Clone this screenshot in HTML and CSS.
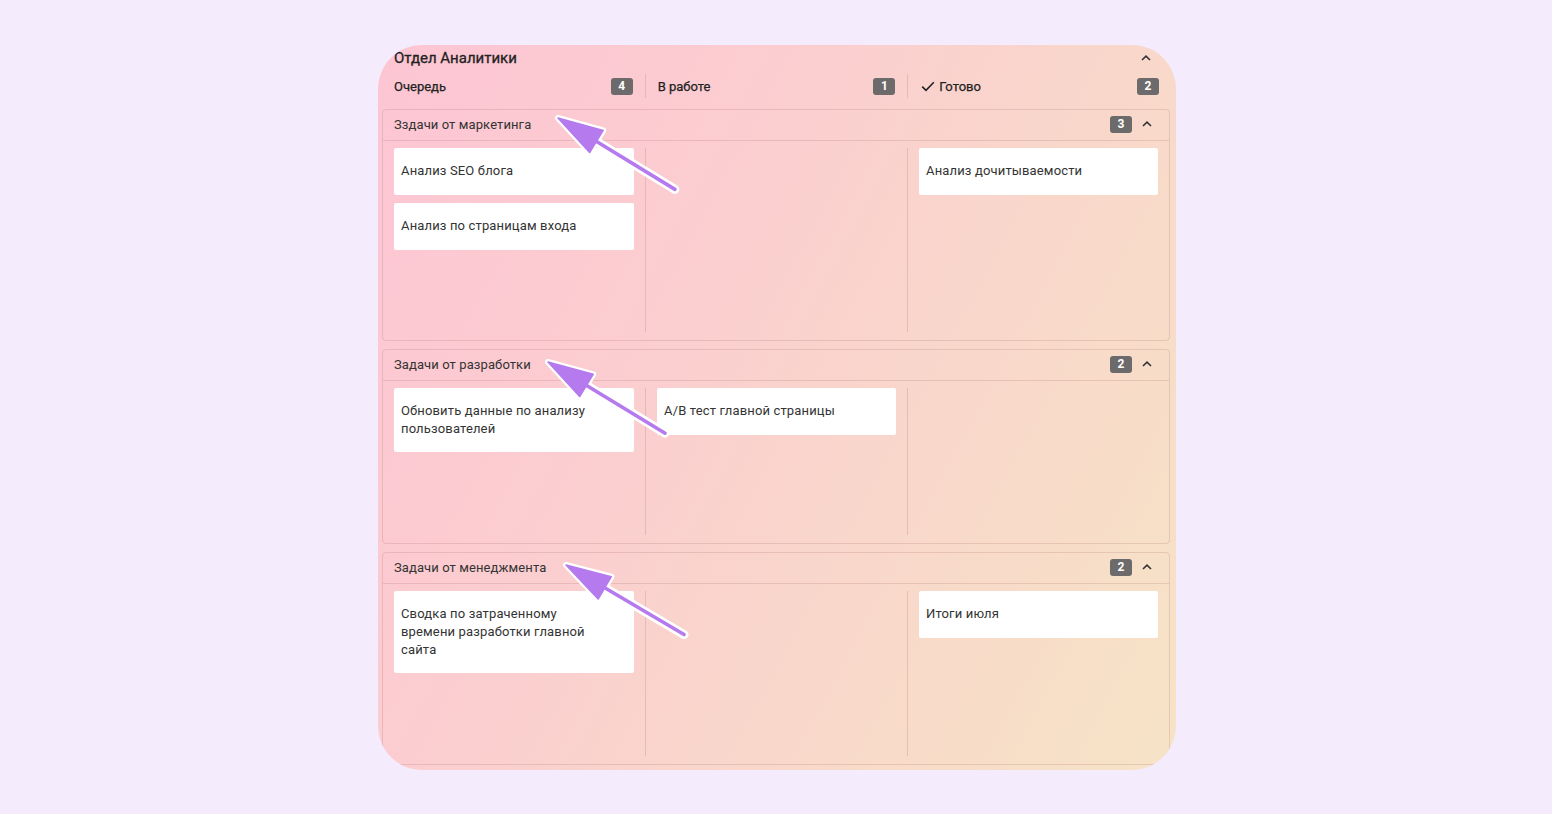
FILE: index.html
```html
<!DOCTYPE html>
<html lang="ru">
<head>
<meta charset="utf-8">
<title>Отдел Аналитики</title>
<link rel="stylesheet" href="styles.css">
</head>
<body>
<div class="panel">
  <div class="panel-head">
    <span class="dot"></span>
    <span class="panel-title">Отдел Аналитики</span>
    <svg class="chev" width="10" height="6" viewBox="0 0 10 6"><path d="M1 5L5 1.2L9 5" fill="none" stroke="#333" stroke-width="1.6"/></svg>
  </div>
  <div class="col-heads">
    <div class="col-head"><span class="col-name">Очередь</span><span class="badge">4</span></div>
    <div class="col-head"><span class="col-name">В работе</span><span class="badge">1</span></div>
    <div class="col-head"><span class="col-name"><svg class="check" width="14" height="11" viewBox="0 0 14 11"><path d="M1.2 5.6L5 9.3L12.8 1.3" fill="none" stroke="#222" stroke-width="1.6"/></svg>Готово</span><span class="badge">2</span></div>
  </div>

  <div class="lanes">
    <section class="lane">
      <div class="lane-head">
        <span class="lane-title">Зздачи от маркетинга</span>
        <span class="badge">3</span>
        <svg class="chev" width="10" height="6" viewBox="0 0 10 6"><path d="M1 5L5 1.2L9 5" fill="none" stroke="#333" stroke-width="1.6"/></svg>
      </div>
      <div class="lane-body lane-body-a">
        <div class="col">
          <div class="card">Анализ SEO блога</div>
          <div class="card">Анализ по страницам входа</div>
        </div>
        <div class="col"></div>
        <div class="col">
          <div class="card">Анализ дочитываемости</div>
        </div>
      </div>
    </section>

    <section class="lane">
      <div class="lane-head">
        <span class="lane-title">Задачи от разработки</span>
        <span class="badge">2</span>
        <svg class="chev" width="10" height="6" viewBox="0 0 10 6"><path d="M1 5L5 1.2L9 5" fill="none" stroke="#333" stroke-width="1.6"/></svg>
      </div>
      <div class="lane-body lane-body-b">
        <div class="col">
          <div class="card">Обновить данные по анализу пользователей</div>
        </div>
        <div class="col">
          <div class="card">A/B тест главной страницы</div>
        </div>
        <div class="col"></div>
      </div>
    </section>

    <section class="lane">
      <div class="lane-head">
        <span class="lane-title">Задачи от менеджмента</span>
        <span class="badge">2</span>
        <svg class="chev" width="10" height="6" viewBox="0 0 10 6"><path d="M1 5L5 1.2L9 5" fill="none" stroke="#333" stroke-width="1.6"/></svg>
      </div>
      <div class="lane-body lane-body-c">
        <div class="col">
          <div class="card">Сводка по затраченному времени разработки главной сайта</div>
        </div>
        <div class="col"></div>
        <div class="col">
          <div class="card">Итоги июля</div>
        </div>
      </div>
    </section>
  </div>

  <svg class="arrows" width="798" height="725" viewBox="0 0 798 725">
    <defs>
      <g id="arrow">
        <line x1="38" y1="0" x2="137" y2="0" stroke="#ffffff" stroke-width="9" stroke-linecap="round"/>
        <polygon points="0,0 45,-13 45,13" fill="#ffffff" stroke="#ffffff" stroke-width="6" stroke-linejoin="round"/>
        <line x1="38" y1="0" x2="137" y2="0" stroke="#b47aee" stroke-width="3.6" stroke-linecap="round"/>
        <polygon points="0,0 45,-13 45,13" fill="#b47aee" stroke="#b47aee" stroke-width="1.5" stroke-linejoin="round"/>
      </g>
    </defs>
    <use href="#arrow" transform="translate(180 73) rotate(31.4)"/>
    <use href="#arrow" transform="translate(170 317) rotate(31.3)"/>
    <use href="#arrow" transform="translate(188 520) rotate(30.5)"/>
  </svg>
</div>
</body>
</html>
```
FILE: styles.css
```css
* { box-sizing: border-box; }

html, body {
  margin: 0;
  padding: 0;
}

body {
  background: #f4ebfd;
  font-family: Roboto, "Liberation Sans", Arial, sans-serif;
  color: #2b2b2b;
  padding-top: 45px;
}

.panel {
  position: relative;
  width: 798px;
  height: 725px;
  margin: 0 0 0 378px;
  padding: 0 6px 0 4px;
  border-radius: 44px;
  overflow: hidden;
  background: linear-gradient(118deg, #fdc5d3 0%, #fbcdd0 35%, #f9d6cb 60%, #f6e3c6 100%);
}

.panel-head {
  height: 25px;
  display: flex;
  align-items: center;
  padding: 1px 19px 0 3px;
}

.dot {
  width: 2px;
  height: 2px;
  background: #444;
  border-radius: 1px;
  margin: 8px 7px 0 0;
}

.panel-title {
  font-size: 15px;
  font-weight: 400;
  -webkit-text-stroke: 0.3px #222;
  color: #222;
  flex: 1;
}

.chev { display: block; }

.col-heads {
  display: grid;
  grid-template-columns: repeat(3, 1fr);
  margin: 4px 0 11px;
}

.col-head {
  height: 24px;
  display: flex;
  align-items: center;
  justify-content: space-between;
  padding: 0 12px;
}

.col-head + .col-head {
  border-left: 1px solid rgba(160, 100, 100, 0.22);
}

.col-head:last-child { padding-right: 11px; }

.col-name {
  display: flex;
  align-items: center;
  font-size: 13px;
  font-weight: 400;
  -webkit-text-stroke: 0.25px #222;
  color: #222;
}

.check { margin: 0 4px 0 1px; }

.badge {
  display: inline-flex;
  align-items: center;
  justify-content: center;
  width: 22px;
  height: 17px;
  border-radius: 3px;
  background: #6c6a6a;
  color: #fff;
  font-size: 12px;
  font-weight: 700;
  -webkit-text-stroke: 0;
}

.lanes {
  display: flex;
  flex-direction: column;
  gap: 8px;
}

.lane {
  border: 1px solid rgba(170, 110, 110, 0.22);
  border-radius: 4px;
}

.lane-head {
  height: 31px;
  display: flex;
  align-items: center;
  padding: 0 17px 2px 11px;
  border-bottom: 1px solid rgba(170, 110, 110, 0.22);
}

.lane-title {
  flex: 1;
  font-size: 13px;
  color: #333;
  letter-spacing: 0.1px;
}

.lane-head .badge { margin-right: 10px; }

.lane-body {
  display: grid;
  grid-template-columns: repeat(3, 1fr);
  padding: 7px 0 8px;
}

.lane-body-a { height: 199px; }
.lane-body-b { height: 162px; }
.lane-body-c { height: 180px; }

.col {
  padding: 0 11px;
  display: flex;
  flex-direction: column;
  gap: 8px;
}

.col + .col {
  border-left: 1px solid rgba(160, 100, 100, 0.22);
}

.col:last-child { padding-right: 11px; }

.card {
  background: #fff;
  border-radius: 2px;
  padding: 14px 20px 14px 7px;
  min-height: 47px;
  font-size: 13px;
  line-height: 18px;
  color: #333;
  letter-spacing: 0.15px;
}

.arrows {
  position: absolute;
  left: 0;
  top: 0;
  pointer-events: none;
}
```
